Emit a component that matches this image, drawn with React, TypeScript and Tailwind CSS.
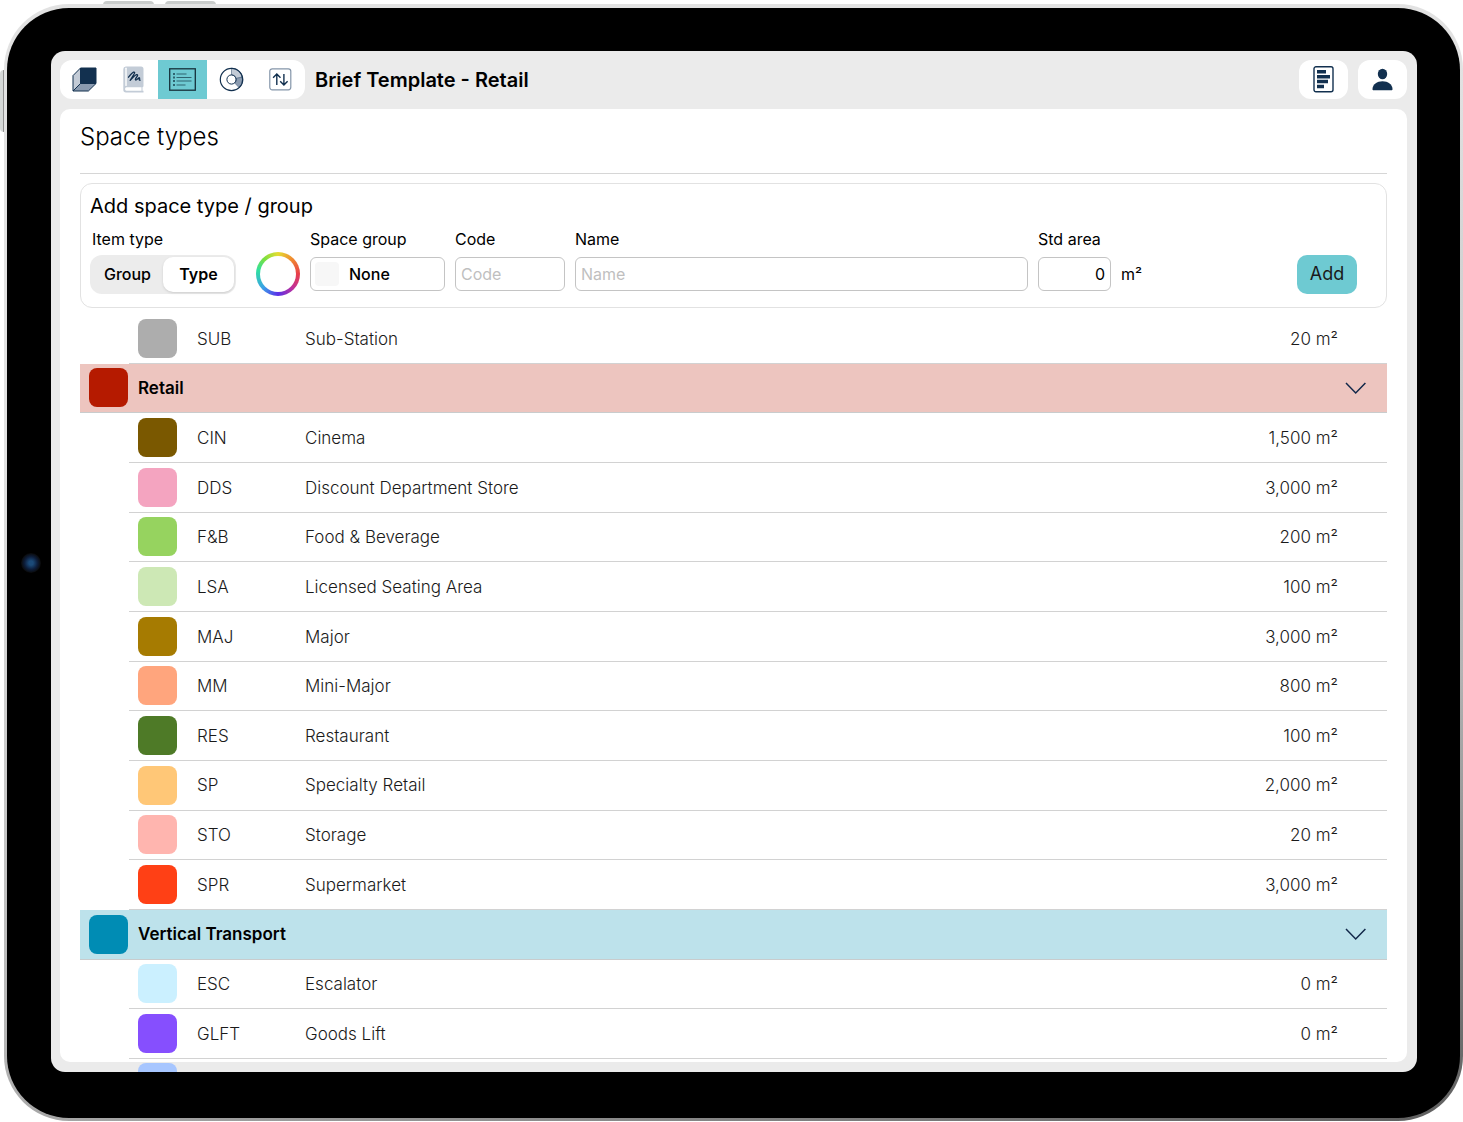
import { useState } from "react";
import type { ReactNode } from "react";
import { clsx } from "clsx";

type SpaceType = { code: string; name: string; area: string; color: string };
type SpaceGroup = { name: string; color: string; tint: string; items: SpaceType[] };

const looseTypes: SpaceType[] = [{ code: "SUB", name: "Sub-Station", area: "20 m²", color: "bg-[#adadad]" }];

const groups: SpaceGroup[] = [
  {
    name: "Retail",
    color: "bg-[#b51a00]",
    tint: "bg-[#edc5bf]",
    items: [
      { code: "CIN", name: "Cinema", area: "1,500 m²", color: "bg-[#7a5800]" },
      { code: "DDS", name: "Discount Department Store", area: "3,000 m²", color: "bg-[#f4a4c0]" },
      { code: "F&B", name: "Food & Beverage", area: "200 m²", color: "bg-[#96d35f]" },
      { code: "LSA", name: "Licensed Seating Area", area: "100 m²", color: "bg-[#cde8b5]" },
      { code: "MAJ", name: "Major", area: "3,000 m²", color: "bg-[#a67b01]" },
      { code: "MM", name: "Mini-Major", area: "800 m²", color: "bg-[#ffa57d]" },
      { code: "RES", name: "Restaurant", area: "100 m²", color: "bg-[#4e7a27]" },
      { code: "SP", name: "Specialty Retail", area: "2,000 m²", color: "bg-[#ffc777]" },
      { code: "STO", name: "Storage", area: "20 m²", color: "bg-[#ffb5af]" },
      { code: "SPR", name: "Supermarket", area: "3,000 m²", color: "bg-[#ff4015]" },
    ],
  },
  {
    name: "Vertical Transport",
    color: "bg-[#008cb4]",
    tint: "bg-[#bde2eb]",
    items: [
      { code: "ESC", name: "Escalator", area: "0 m²", color: "bg-[#cbf0ff]" },
      { code: "GLFT", name: "Goods Lift", area: "0 m²", color: "bg-[#864ffe]" },
    ],
  },
];

function CubeIcon() {
  return (
    <svg width="25" height="25" viewBox="0 0 25 25" stroke="#12304f" strokeLinejoin="round">
      <path d="M8.5 1 1 8.6V24l7.5-7.5z" fill="#c3cbd6" />
      <path d="M1 24l7.5-7.5H24L16.4 24z" fill="#8b9bb0" />
      <path d="M8.5 1H24v15.5H8.5z" fill="#12304f" />
    </svg>
  );
}

function BookIcon() {
  return (
    <svg width="23" height="27" viewBox="0 0 23 27" fill="none">
      <path d="M4 .5h15A2.500 2.500 0 0 1 21.500 3v17a1.200 1.200 0 0 1-1 1.200v3.600h1v1.700H4A2.700 2.700 0 0 1 1.300 23.800V3A2.600 2.600 0 0 1 4 .5z" fill="#c3ccd7" />
      <path d="M4 2.200v17.200" stroke="#fff" strokeWidth="1.400" strokeLinecap="round" />
      <path d="M19.500 21.300H4.400a1.800 1.800 0 0 0 0 3.500h15.100z" fill="#fff" />
      <path
        d="M6.500 11.200C8.300 9 10.600 6.700 11.600 6.200c1-.4 1.300.4.8 1.300L8.200 14.400c2.300-2.700 5-5.200 6.400-5.700 1-.3 1.300.5.700 1.400l-1.700 2.600c-.6 1.100 0 1.700.9 1.100l2.300-1.900c.6-.4 1.100.1.700.8-.5.8-.5 1.400.7 1.400"
        stroke="#12304f"
        strokeWidth="1.300"
        strokeLinecap="round"
        strokeLinejoin="round"
      />
    </svg>
  );
}

function ListIcon() {
  return (
    <svg width="27" height="23" viewBox="0 0 27 23" fill="none" stroke="#16303a">
      <rect x=".7" y=".8" width="25.600" height="21.400" strokeWidth="1.300" />
      <g stroke="#2f6470" strokeWidth="1.200">
        <path d="M7.500 6h10M7.500 9.500h15M7.500 13h15M7.500 17h9" />
        <path d="M4 6h2M4 9.500h2M4 13h2M4 17h2" strokeWidth="1.800" />
      </g>
    </svg>
  );
}

function DonutIcon() {
  return (
    <svg width="25" height="25" viewBox="0 0 25 25" fill="none" stroke="#12304f">
      <path d="M12.500 1.200A11.300 11.300 0 0 1 23.500 10L17 11.500a4.600 4.600 0 0 0-4.500-3.600z" fill="#c3cbd6" stroke="#5c7189" strokeWidth=".7" />
      <path d="M23.500 10a11.300 11.300 0 0 1-3.300 10.700L15.700 16A4.600 4.600 0 0 0 17 11.500z" fill="#8b9bb0" stroke="#5c7189" strokeWidth=".7" />
      <circle cx="12.500" cy="12.500" r="11.200" strokeWidth="1.200" />
      <circle cx="12.500" cy="12.500" r="4.600" />
    </svg>
  );
}

function SortIcon() {
  return (
    <svg width="23" height="23" viewBox="0 0 23 23" fill="none" stroke="#12304f" strokeWidth="1.400">
      <rect x=".8" y=".8" width="21" height="21" rx="2.500" stroke="#8495a9" strokeWidth="1.200" />
      <path d="M7.800 17V6M4.100 9.700 7.800 6l3.700 3.700M14.900 6v11M11.200 13.300l3.700 3.700 3.700-3.700" />
    </svg>
  );
}

function ReportIcon() {
  return (
    <svg width="21" height="27" viewBox="0 0 21 27" fill="none">
      <rect x="1" y=".8" width="19" height="25" rx="2" stroke="#12304f" strokeWidth="1.400" />
      <path d="M4 5.800h9M4 10.700h13M4 15.500h11M4 20.500h7" stroke="#12304f" strokeWidth="3.600" />
    </svg>
  );
}

function UserIcon() {
  return (
    <svg width="21" height="23" viewBox="0 0 21 23" fill="#12304f">
      <ellipse cx="10.500" cy="6" rx="4.700" ry="5.200" />
      <path d="M.5 21.300c0-4.800 4.500-8 10-8s10 3.200 10 8c0 .6-.4 1-1 1h-18c-.6 0-1-.4-1-1z" />
    </svg>
  );
}

function ChevronIcon() {
  return (
    <svg width="22" height="14" viewBox="0 0 22 14" fill="none" stroke="#12284a" strokeWidth="1.500">
      <path d="M1 2l9.700 10L20.400 2" />
    </svg>
  );
}

const tabs = [
  { label: "Model", icon: <CubeIcon /> },
  { label: "Notes", icon: <BookIcon /> },
  { label: "Space types", icon: <ListIcon /> },
  { label: "Chart", icon: <DonutIcon /> },
  { label: "Transfer", icon: <SortIcon /> },
];

function Swatch({ color }: { color: string }) {
  return <span className={clsx("block size-[39px] shrink-0 rounded-lg", color)} />;
}

function TypeRow({ item }: { item: SpaceType }) {
  return (
    <tr>
      <td />
      <td className="border-b border-[#d2d2d2] pl-[9px]">
        <Swatch color={item.color} />
      </td>
      <td className="border-b border-[#d2d2d2] pt-[2px]">{item.code}</td>
      <td className="border-b border-[#d2d2d2] pt-[2px]">{item.name}</td>
      <td className="border-b border-[#d2d2d2] pt-[2px] pr-[49px] text-right">{item.area}</td>
    </tr>
  );
}

function GroupRows({ group }: { group: SpaceGroup }) {
  const [open, setOpen] = useState(true);

  return (
    <>
      <tr className={group.tint}>
        <th colSpan={5} scope="colgroup" className="border-b border-[#c9cccd] pr-5 pl-[9px] font-semibold text-black">
          <div className="flex items-center gap-[10px]">
            <Swatch color={group.color} />
            <span className="flex-1 pt-[2px] text-left">{group.name}</span>
            <button type="button" aria-label={group.name} aria-expanded={open} onClick={() => setOpen(!open)}>
              <ChevronIcon />
            </button>
          </div>
        </th>
      </tr>
      {open && group.items.map((item) => <TypeRow key={item.code} item={item} />)}
    </>
  );
}

function Field({ label, id, className, children }: { label: string; id: string; className?: string; children: ReactNode }) {
  return (
    <div className={clsx("flex flex-col gap-[3px]", className)}>
      <label htmlFor={id} className="leading-5">
        {label}
      </label>
      <div className="relative flex h-11 items-center gap-[10px]">{children}</div>
    </div>
  );
}

const inputClass = "h-[34px] rounded-md border border-[#c4c4c4] bg-white px-[5px] placeholder:text-[#bfbfbf]";

function AddForm() {
  const [kind, setKind] = useState("Type");

  return (
    <form
      onSubmit={(e) => e.preventDefault()}
      className="rounded-xl border border-[#e2e2e2] pt-[10px] pr-[29px] pb-[11px] pl-[9px] text-base text-black"
    >
      <h2 className="text-xl leading-6">Add space type / group</h2>
      <div className="mt-[11px] flex items-end">
        <div className="flex flex-col gap-[3px]">
          <span id="kind" className="pl-[2px] leading-5">
            Item type
          </span>
          <div className="flex h-11 items-center">
            <div role="group" aria-labelledby="kind" className="flex rounded-xl bg-[#ececec] p-[2px]">
              {["Group", "Type"].map((k) => (
                <button
                  key={k}
                  type="button"
                  aria-pressed={kind === k}
                  onClick={() => setKind(k)}
                  className={clsx(
                    "h-[35px] w-[71px] rounded-[10px]",
                    kind === k ? "bg-white font-semibold shadow" : "font-medium",
                  )}
                >
                  {k}
                </button>
              ))}
            </div>
          </div>
        </div>
        <button
          type="button"
          aria-label="Colour"
          className="mr-[10px] ml-5 size-11 rounded-full bg-[conic-gradient(#e4dc32,#f08a30_12%,#e83e4a_25%,#c0309a_37%,#5a30e8_50%,#3aa0e8_63%,#30e0a0_78%,#78e040_88%,#e4dc32)] p-1"
        >
          <span className="block size-full rounded-full bg-white" />
        </button>
        <Field label="Space group" id="group" className="mr-[10px] w-[135px]">
          <select id="group" className={clsx(inputClass, "w-full appearance-none pl-[38px]! font-medium")}>
            <option>None</option>
          </select>
          <span className="pointer-events-none absolute left-[5px] size-6 rounded-sm bg-[#f7f7f7]" />
        </Field>
        <Field label="Code" id="code" className="mr-[10px] w-[110px]">
          <input id="code" placeholder="Code" className={clsx(inputClass, "w-full")} />
        </Field>
        <Field label="Name" id="name" className="mr-[10px] flex-1">
          <input id="name" placeholder="Name" className={clsx(inputClass, "w-full")} />
        </Field>
        <Field label="Std area" id="area" className="w-[259px]">
          <input id="area" inputMode="numeric" defaultValue="0" className={clsx(inputClass, "w-[73px] text-right")} />
          <span>m²</span>
        </Field>
        <div className="flex h-11 items-center">
          <button type="submit" className="h-[39px] w-[60px] rounded-[10px] bg-[#6ecad2] text-lg text-[#1a1a1a]">
            Add
          </button>
        </div>
      </div>
    </form>
  );
}

export default function App() {
  return (
    <div className="relative h-screen overflow-hidden bg-white pt-1 pb-px pl-1 font-['Inter',sans-serif]">
      {/* hardware buttons */}
      <span className="absolute top-px left-[103px] h-1 w-[51px] rounded-t-sm border-b border-[#8f8f8f] bg-[#c9cccb]" />
      <span className="absolute top-px left-[165px] h-1 w-[51px] rounded-t-sm border-b border-[#8f8f8f] bg-[#c9cccb]" />
      <span className="absolute top-[70px] left-0 h-[62px] w-1 rounded-l-sm border-r border-[#8f8f8f] bg-[#d5d8d7]" />

      <div className="relative h-full rounded-[65px] bg-[linear-gradient(165deg,#e2e2e2_30%,#b4b4b4_70%,#5e5e5e)] p-[3px] pt-1">
        <div className="h-full rounded-[62px] bg-black pt-[43px] pr-[43px] pb-[46px] pl-[44px]">
          {/* front camera */}
          <span className="absolute top-1/2 left-[17px] size-5 -translate-y-1/2 rounded-full bg-[radial-gradient(#1b4a78_15%,#0d1e3c_45%,#0a0a0a_70%)]" />
          <main className="flex h-full flex-col overflow-hidden rounded-[14px] bg-[#ebebeb] pt-[9px] pr-[10px] pb-[10px] pl-[9px]">
            <header className="flex items-center gap-[10px]">
              <nav className="flex overflow-hidden rounded-xl bg-white">
                {tabs.map((tab) => (
                  <button
                    key={tab.label}
                    type="button"
                    aria-label={tab.label}
                    className={clsx(
                      "grid h-[39px] w-[49px] place-items-center",
                      tab.label === "Space types" && "bg-[#6ecad2]",
                    )}
                  >
                    {tab.icon}
                  </button>
                ))}
              </nav>
              <h1 className="flex-1 text-xl font-semibold text-black">Brief Template - Retail</h1>
              <button type="button" aria-label="Report" className="grid h-[39px] w-[49px] place-items-center rounded-xl bg-white">
                <ReportIcon />
              </button>
              <button type="button" aria-label="Account" className="grid h-[39px] w-[49px] place-items-center rounded-xl bg-white">
                <UserIcon />
              </button>
            </header>

            <section className="mt-[10px] flex min-h-0 flex-1 flex-col rounded-[10px] bg-white px-5">
              <h2 className="border-b border-[#d6d6d6] pt-3 pb-5 text-2xl leading-8 font-light text-black">Space types</h2>
              <div className="mt-[9px]">
                <AddForm />
              </div>
              <div className="mt-[6px] min-h-0 flex-1">
                <table className="h-full w-full table-fixed border-separate border-spacing-0 text-[17px] font-light text-[#1a1a1a]">
                  <colgroup>
                    <col className="w-[49px]" />
                    <col className="w-[68px]" />
                    <col className="w-[108px]" />
                    <col />
                    <col className="w-[200px]" />
                  </colgroup>
                  <tbody>
                    {looseTypes.map((item) => (
                      <TypeRow key={item.code} item={item} />
                    ))}
                    {groups.map((group) => (
                      <GroupRows key={group.name} group={group} />
                    ))}
                  </tbody>
                </table>
              </div>
              {/* next row, mostly scrolled out of view */}
              <div className="h-[3px]">
                <div className="pt-1 pl-[58px]">
                  <Swatch color="bg-[#a7c6ff]" />
                </div>
              </div>
            </section>
          </main>
        </div>
      </div>
    </div>
  );
}
